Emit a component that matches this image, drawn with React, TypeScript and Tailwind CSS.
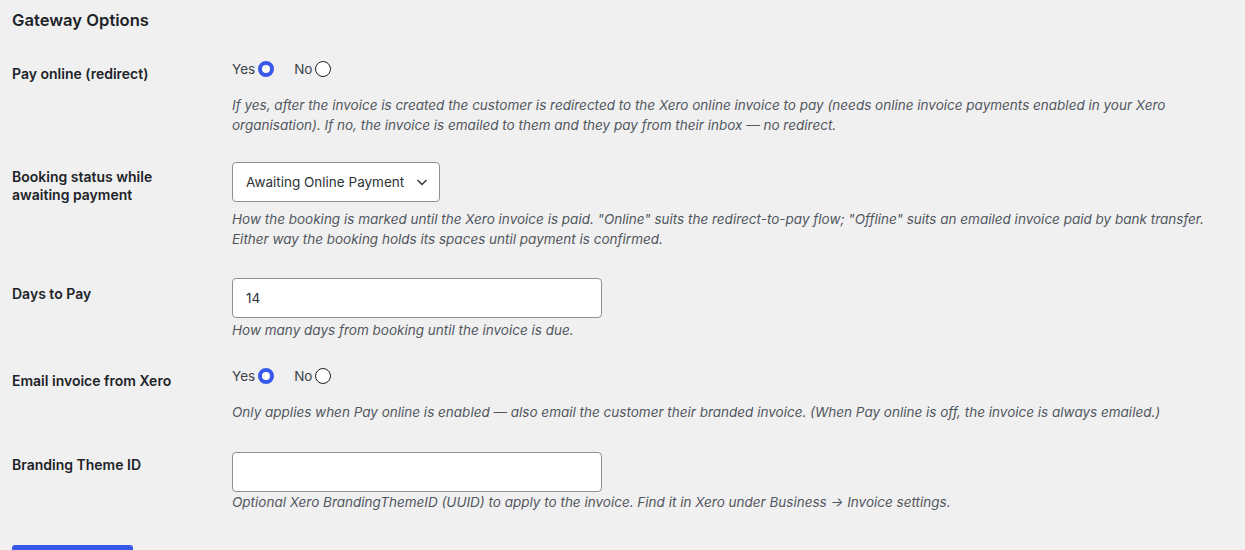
import { ReactNode } from "react";

const desc = "text-[13.5px] italic leading-[20px] text-[#50575e]";

function Row({
  label,
  children,
  thPad = "pt-[21px]",
  tdPad = "py-[15px]",
}: {
  label: ReactNode;
  children: ReactNode;
  thPad?: string;
  tdPad?: string;
}) {
  return (
    <div className="flex">
      <div className={`w-[220px] shrink-0 pr-[10px] ${thPad} pb-5 text-[14px] font-semibold leading-[18px] text-[#1d2327]`}>
        {label}
      </div>
      <div className={`flex-1 ${tdPad} pr-[10px]`}>{children}</div>
    </div>
  );
}

function Radios({ yes }: { yes: boolean }) {
  return (
    <div className="flex h-5 items-center text-[13.5px] text-[#3c434a]">
      <label className="flex items-center">
        Yes
        <span
          className={`ml-[3px] box-border h-4 w-4 rounded-full bg-white ${
            yes ? "border-[4.5px] border-[#3858e9]" : "border border-[#1d2327]"
          }`}
        />
      </label>
      <label className="ml-5 flex items-center">
        No
        <span
          className={`ml-[3px] box-border h-4 w-4 rounded-full bg-white ${
            !yes ? "border-[4.5px] border-[#3858e9]" : "border border-[#1d2327]"
          }`}
        />
      </label>
    </div>
  );
}

export default function App() {
  return (
    <div className="min-h-screen bg-[#f0f0f1] pl-3 font-['Inter','Liberation_Sans',sans-serif]">
      <h2 className="pt-[9px] text-[16.6px] font-semibold leading-[22px] text-[#1d2327]">Gateway Options</h2>

      <div className="mt-[13px]">
        <Row label="Pay online (redirect)" thPad="pt-[21px]" tdPad="pt-[15px] pb-[12px]">
          <Radios yes />
          <p className={`${desc} mt-4`}>
            If yes, after the invoice is created the customer is redirected to the Xero online invoice to pay (needs online
            invoice payments enabled in your Xero
            <br />
            organisation). If no, the invoice is emailed to them and they pay from their inbox — no redirect.
          </p>
        </Row>

        <Row label={<>Booking status while<br />awaiting payment</>} thPad="pt-[21px]" tdPad="pt-[15px] pb-[14px]">
          <div className="flex h-10 w-[208px] items-center justify-between rounded-[4px] border border-[#8c8f94] bg-white pl-[13px] pr-[10px] text-[13.5px] text-[#2c3338]">
            <span>Awaiting Online Payment</span>
            <svg width="14" height="14" viewBox="0 0 14 14" fill="none" stroke="#2c3338" strokeWidth="1.4">
              <path d="M2.5 5 7 9.5 11.5 5" />
            </svg>
          </div>
          <p className={`${desc} mt-[7px]`}>
            How the booking is marked until the Xero invoice is paid. "Online" suits the redirect-to-pay flow; "Offline"
            suits an emailed invoice paid by bank transfer.
            <br />
            Either way the booking holds its spaces until payment is confirmed.
          </p>
        </Row>

        <Row label="Days to Pay" thPad="pt-[22px]" tdPad="pt-[15px] pb-[12px]">
          <div className="flex h-10 w-[370px] items-center rounded-[4px] border border-[#8c8f94] bg-white pl-[13px] text-[13.5px] text-[#2c3338]">
            14
          </div>
          <p className={`${desc} mt-[2px]`}>How many days from booking until the invoice is due.</p>
        </Row>

        <Row label="Email invoice from Xero" thPad="pt-[20px]" tdPad="pt-[14px] pb-[15px]">
          <Radios yes />
          <p className={`${desc} mt-4`}>
            Only applies when Pay online is enabled — also email the customer their branded invoice. (When Pay online is
            off, the invoice is always emailed.)
          </p>
        </Row>

        <Row label="Branding Theme ID" thPad="pt-[19px]">
          <div className="h-10 w-[370px] rounded-[4px] border border-[#8c8f94] bg-white" />
          <p className={`${desc}`}>
            Optional Xero BrandingThemeID (UUID) to apply to the invoice. Find it in Xero under Business → Invoice settings.
          </p>
        </Row>
      </div>

      <div className="pt-[18px]">
        <button aria-label="Save Changes" className="h-11 w-[121px] rounded-[3px] bg-[#3858e9]" />
      </div>
    </div>
  );
}
